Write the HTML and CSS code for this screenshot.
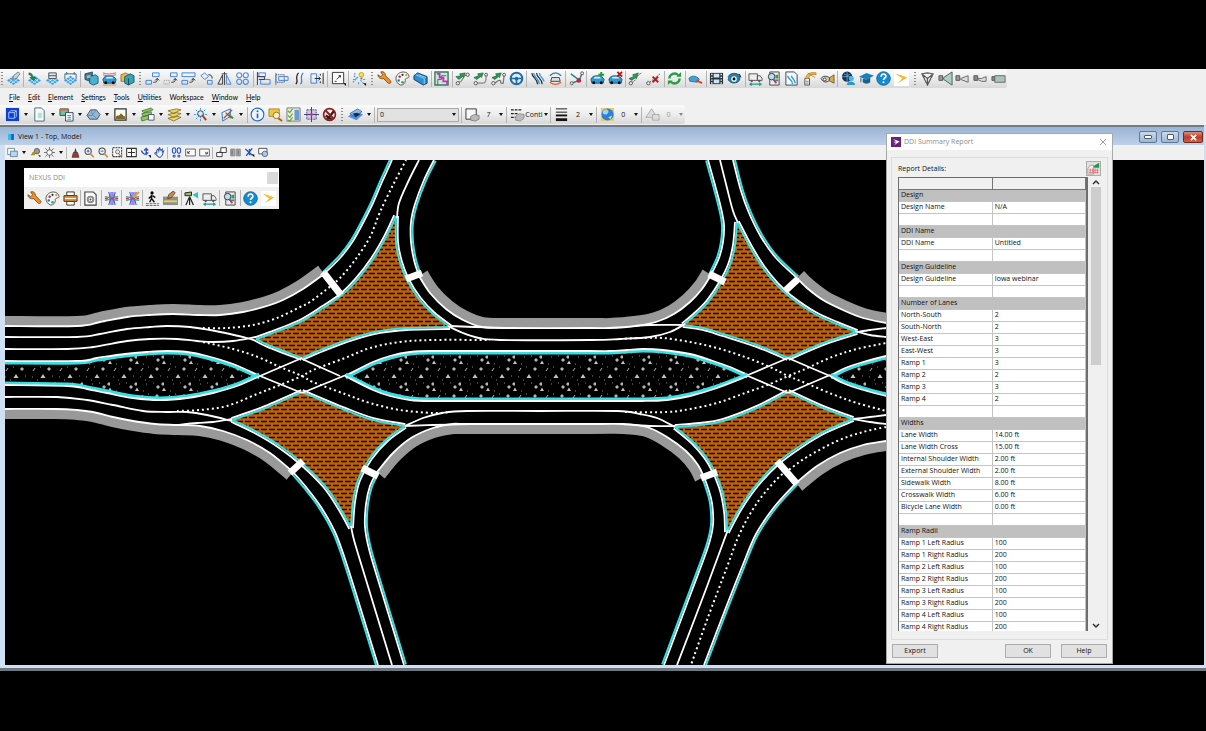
FILE: index.html
```html
<!DOCTYPE html>
<html lang="en">
<head>
    <meta charset="UTF-8">
    <meta name="viewport" content="width=device-width, initial-scale=1.0">
    <title>View 1 - Top, Model</title>
    <link rel="stylesheet" href="styles.css">
</head>
<body>
    <svg class="sprite" aria-hidden="true">
        <symbol id="tiles" viewBox="0 0 16 16"><path d="M8 5l7 5-7 5-7-5z" fill="#3aa0dd"/><path d="M3.500 8.500l7 5M5.500 6.500l7 5M12.500 8.500l-7 5M10.500 6.500l-7 5" stroke="#e8f6ff" stroke-width=".8"/></symbol>
        <symbol id="tile-pen" viewBox="0 0 16 16"><use href="#tiles"/><path d="M7 9l1-4 5-4 2 2-4 5z" fill="#c9d3d8" stroke="#56646c" stroke-width=".8"/></symbol>
        <symbol id="tile-in" viewBox="0 0 16 16"><use href="#tiles"/><path d="M2 2c4 0 4 3 5 5h3L7 10 3 7h2C4 5 4 4 2 4z" fill="#1f8a4c" stroke="#114d2b" stroke-width=".5"/></symbol>
        <symbol id="tile-db" viewBox="0 0 16 16"><use href="#tiles"/><path d="M4 2h8v6H4z" fill="#dde5e8" stroke="#47545b"/><path d="M4 5h8" stroke="#47545b"/></symbol>
        <symbol id="tile-frame" viewBox="0 0 16 16"><use href="#tiles"/><path d="M2 9V3h12v6M4 1v3M12 1v3" fill="none" stroke="#3c6680"/></symbol>
        <symbol id="blocks" viewBox="0 0 16 16"><path d="M1 3l8-2v11l-8-3z" fill="#2a7cb5" stroke="#1b4258" stroke-width=".8"/><path d="M6 6l6-2 3 2v7l-5 2-4-2z" fill="#45b0d8" stroke="#1b4258" stroke-width=".8"/><path d="M3 5l4-1v3l-4 1z" fill="#e9b23f"/></symbol>
        <symbol id="blocks-2" viewBox="0 0 16 16"><path d="M1 4l5-2 4 2v7H1z" fill="#e9b94d" stroke="#6b552a" stroke-width=".7"/><path d="M5 6l6-3 4 2v7l-6 3-4-2z" fill="#36a3b8" stroke="#17434d" stroke-width=".8"/><path d="M9 8v7" stroke="#17434d"/></symbol>
        <symbol id="car" viewBox="0 0 16 16"><path d="M1 9c1-3 3-4 7-4s6 2 7 4l-1 4H2z" fill="#2f98d6" stroke="#173f5a" stroke-width=".8"/><path d="M4 8h8l-1-2H5z" fill="#d7effc"/><circle cx="4" cy="12.500" r="1.500"/><circle cx="12" cy="12.500" r="1.500"/></symbol>
        <symbol id="car-lines" viewBox="0 0 16 16"><use href="#car"/><path d="M1 2c5 2 9 1 14 0M1 4c5 2 9 1 14 0" fill="none" stroke="#d85a6b"/><path d="M1 15h14" stroke="#d9963c"/></symbol>
        <symbol id="car-plus" viewBox="0 0 16 16"><use href="#car"/><path d="M12 1v6M9 4h6" stroke="#1b9a3f" stroke-width="2"/></symbol>
        <symbol id="car-x" viewBox="0 0 16 16"><use href="#car"/><path d="M10 1l5 5M15 1l-5 5" stroke="#b3161c" stroke-width="2"/></symbol>
        <symbol id="car-arcs" viewBox="0 0 16 16"><path d="M2 5c4-4 8-4 12 0" fill="none" stroke="#2a7fc0" stroke-width="1.500"/><path d="M4 7h8l1 4H3z" fill="#d9e2e6" stroke="#38454b"/><path d="M2 12c4 3 8 3 12 0" fill="none" stroke="#e8622a" stroke-width="1.500"/></symbol>
        <symbol id="car-brush" viewBox="0 0 16 16"><path d="M1 8c1-3 8-4 11 1l-2 3-8-1z" fill="#3aa3dc" stroke="#1c4f70" stroke-width=".7"/><path d="M9 10l6 3" stroke="#d8442f" stroke-width="2"/></symbol>
        <symbol id="copy" viewBox="0 0 16 16" fill="none" stroke="#3b7fe0"><path d="M8 2h7v4H8zM1 10h6v4H1z"/><path d="M9 12c4 0 4-1 4-4m-2 2l2-2 2 2" stroke="#222"/></symbol>
        <symbol id="move" viewBox="0 0 16 16" fill="none"><path d="M8 2h7v4H8z" stroke="#3b7fe0"/><path d="M1 10h6v4H1z" stroke="#999" stroke-dasharray="1 1"/><path d="M9 12c4 0 4-1 4-4m-2 2l2-2 2 2" stroke="#222"/></symbol>
        <symbol id="scale" viewBox="0 0 16 16" fill="none"><path d="M1 2h14v4H1zM1 10h6v4H1z" stroke="#3b7fe0"/><path d="M9 12c4 0 4-1 4-4m-2 2l2-2 2 2" stroke="#222"/></symbol>
        <symbol id="rotate" viewBox="0 0 16 16" fill="none"><path d="M2 5l4-3 4 4-4 3zM9 10h5v4H9z" stroke="#3b7fe0"/><path d="M10 4c3 0 4 1 4 4" stroke="#222"/></symbol>
        <symbol id="mirror" viewBox="0 0 16 16" fill="none"><path d="M6 4v10H1z" stroke="#333"/><path d="M10 4v10h5z" stroke="#3b7fe0"/><path d="M8 1v14M5 3h6" stroke="#444"/></symbol>
        <symbol id="array" viewBox="0 0 16 16" fill="none" stroke="#4a8ee6" stroke-width="1.200"><circle cx="4.500" cy="4.500" r="2.700"/><circle cx="11.500" cy="4.500" r="2.700"/><circle cx="4.500" cy="11.500" r="2.700"/><circle cx="11.500" cy="11.500" r="2.700"/></symbol>
        <symbol id="align" viewBox="0 0 16 16" fill="none"><path d="M3 2h7v4H3zM5 9h10v5H5z" stroke="#3b7fe0"/><path d="M1.500 1v14M1 6h8v3H3" stroke="#334"/></symbol>
        <symbol id="stretch" viewBox="0 0 16 16" fill="none"><path d="M2 4h9v8H2z" stroke="#222" stroke-dasharray="1 1"/><path d="M5 6h10v4H5z" stroke="#3b7fe0"/><path d="M2 2v13" stroke="#3b7fe0"/></symbol>
        <symbol id="curves" viewBox="0 0 16 16" fill="none" stroke-width="1.300"><path d="M4 14c4-3-2-7 3-12" stroke="#222"/><path d="M9 14c4-3-2-7 3-12" stroke="#3b7fe0"/></symbol>
        <symbol id="trim" viewBox="0 0 16 16" fill="none"><path d="M1 3h6v10H1z" stroke="#3b7fe0"/><path d="M5 8h6M9 6l2 2-2 2M14 2v12M11 3v2M11 11v2" stroke="#222"/></symbol>
        <symbol id="fence" viewBox="0 0 16 16"><path d="M1.500 1.500h12v12h-12z" fill="#fff" stroke="#333"/><path d="M6 9l4-4m-2 0h2v2M4 11h2" fill="none" stroke="#222"/><path d="M13 13h3v3z"/></symbol>
        <symbol id="bulb" viewBox="0 0 16 16"><path d="M1 12l6-6M2 5l3 3M9 10l4 4M3 2v2M1 9h2M7 12v3M12 9h3" stroke="#4a9be8" stroke-width="1.200" stroke-dasharray="2 1"/><circle cx="10" cy="4" r="2.500" fill="#f6e04b" stroke="#a78d20" stroke-width=".7"/><path d="M9 7h2v2H9z" fill="#777"/><path d="M12 13h3v3z"/></symbol>
        <symbol id="wrench" viewBox="0 0 16 16"><path d="M1 4l3 2 2-2-2-3c3-1 5 1 5 4l5 5c2 2 0 4-2 3L7 8C4 9 1 7 1 4z" fill="#ee9226" stroke="#6f4210" stroke-width=".9"/></symbol>
        <symbol id="palette" viewBox="0 0 16 16"><path d="M9 1c4 0 6 3 6 5s-5 1-4 4c0 3-2 5-5 5-3-1-5-4-5-7 0-4 4-7 8-7z" fill="#f4f4f4" stroke="#555"/><circle cx="8" cy="4" r="1.200" fill="#333"/><circle cx="5" cy="6" r="1.300" fill="#9a2f35"/><circle cx="4" cy="10" r="1.300" fill="#2570b8"/><circle cx="8" cy="12" r="1.300" fill="#2f9e44"/><circle cx="12" cy="4.500" r="1.200" fill="#d8a32f"/></symbol>
        <symbol id="barrel" viewBox="0 0 16 16"><path d="M1 5l4-3 10 4v7l-4 2L1 9z" fill="#2d8fd1" stroke="#123c5c"/><path d="M3 4l9 4v6M6 4l8 3" fill="none" stroke="#8fd0f2"/></symbol>
        <symbol id="stair" viewBox="0 0 16 16"><path d="M1 1h14v14H1z" fill="#cfe7da" stroke="#3d7a5c" stroke-width="1.500"/><path d="M3 3h3v4h4v4h4v3" fill="none" stroke="#d628c8" stroke-width="2"/><path d="M4 15V9h4V5h5" fill="none" stroke="#41669b"/></symbol>
        <symbol id="path-a" viewBox="0 0 16 16"><path d="M4 12c5 0 4-8 9-8" fill="none" stroke="#888" stroke-width="1.300"/><circle cx="3" cy="13" r="1.800" fill="#eee" stroke="#555"/><circle cx="13.500" cy="4" r="1.800" fill="#eee" stroke="#555"/><path d="M1 6l5-1-1-2 6-1-2 5-1-1-4 3z" fill="#2c9a57" stroke="#12552c" stroke-width=".6"/></symbol>
        <symbol id="path-b" viewBox="0 0 16 16"><path d="M3 13h7c4 0 4-3 4-9" fill="none" stroke="#888" stroke-width="1.300"/><circle cx="3" cy="13" r="1.800" fill="#eee" stroke="#555"/><circle cx="14" cy="4" r="1.600" fill="#eee" stroke="#555"/><path d="M1 7l5-2-1-2 6-1-2 5-1-1-4 3z" fill="#2c9a57" stroke="#12552c" stroke-width=".6"/></symbol>
        <symbol id="path-c" viewBox="0 0 16 16"><path d="M3 13c3 0 3-3 6-3s-1 4 4 3l1-8" fill="none" stroke="#777" stroke-width="1.300"/><circle cx="2.500" cy="13" r="1.800" fill="#eee" stroke="#555"/><circle cx="14" cy="4" r="1.600" fill="#eee" stroke="#555"/><path d="M1 7l5-2-1-2 6-1-2 5-1-1-4 3z" fill="#2c9a57" stroke="#12552c" stroke-width=".6"/></symbol>
        <symbol id="path-dash" viewBox="0 0 16 16"><path d="M4 12c5 0 4-8 11-10" fill="none" stroke="#555" stroke-dasharray="2 1"/><circle cx="3" cy="13" r="1.800" fill="#eee" stroke="#555"/><path d="M1 8l5-2-1-2 6-2-2 6-1-1-4 3z" fill="#2c9a57" stroke="#12552c" stroke-width=".6"/></symbol>
        <symbol id="path-x" viewBox="0 0 16 16"><path d="M4 12l11-9" fill="none" stroke="#666" stroke-dasharray="2 1"/><circle cx="2.500" cy="13" r="1.800" fill="#eee" stroke="#555"/><path d="M7 6l6 6M13 6l-6 6" stroke="#c4151d" stroke-width="2"/></symbol>
        <symbol id="wheel" viewBox="0 0 16 16"><circle cx="8" cy="8" r="6.200" fill="#d9ecf6" stroke="#1f6da6" stroke-width="2.200"/><circle cx="8" cy="8" r="2" fill="#1f6da6"/><path d="M2 8h12M8 8v6" stroke="#1f6da6" stroke-width="1.800"/></symbol>
        <symbol id="lanes" viewBox="0 0 16 16" fill="none"><path d="M2 2c0 5 6 6 6 12M7 2c0 5 6 6 6 12" stroke="#222" stroke-width="1.200"/><path d="M4 2c0 5 6 6 6 12M10 2c0 4 4 5 5 9" stroke="#3a9be0" stroke-width="1.500"/></symbol>
        <symbol id="nodes" viewBox="0 0 16 16"><path d="M3 13l8-3 3-8M2 3l8 6" fill="none" stroke="#1c7f8a" stroke-width="1.500"/><circle cx="3" cy="13" r="1.600" fill="#eee" stroke="#555"/><circle cx="14" cy="2.500" r="1.600" fill="#eee" stroke="#555"/><circle cx="10.500" cy="10" r="2.500" fill="#c7223a"/></symbol>
        <symbol id="refresh" viewBox="0 0 16 16" fill="none" stroke="#2a9a45" stroke-width="2.500"><path d="M2.500 8a5.500 5.500 0 0 1 9.500-3.500M13.500 8A5.500 5.500 0 0 1 4 11.500"/><path d="M10 6h5V1zM6 10H1v5z" fill="#2a9a45" stroke="none"/></symbol>
        <symbol id="film" viewBox="0 0 16 16"><path d="M1 2h14v12H1z" fill="#26323c"/><path d="M5 3h6v4H5zM5 9h6v4H5z" fill="#cde2f2"/><path d="M3 3v11M13 3v11" stroke="#f2f2f2" stroke-width="1.500" stroke-dasharray="1.500 1.500"/></symbol>
        <symbol id="eye" viewBox="0 0 16 16"><path d="M1 6c3-4 8-5 13-1-2 0 2 4-3 7-5 2-8 0-10-3" fill="#2480ad" stroke="#123a50" stroke-width=".8"/><circle cx="7.500" cy="8.500" r="3" fill="#e7f6fb"/><circle cx="7.500" cy="8.500" r="1.500"/><path d="M13 3l2 4" stroke="#222"/></symbol>
        <symbol id="truck" viewBox="0 0 16 16"><path d="M1 3h9v7H1zM10 5h3l2 3v2h-5z" fill="#eee" stroke="#555"/><circle cx="4" cy="10.500" r="1.300" fill="#555"/><circle cx="12" cy="10.500" r="1.300" fill="#555"/><path d="M2 14h12M4 12.500L2 14l2 1.500M12 12.500l2 1.500-2 1.500" fill="none" stroke="#1f9e94" stroke-width="1.200"/></symbol>
        <symbol id="report" viewBox="0 0 16 16"><path d="M4 1h10v14H4z" fill="#eee" stroke="#444"/><circle cx="6" cy="6" r="3.500" fill="#b9def0" stroke="#333"/><path d="M8 9l3 4" stroke="#c33a2e" stroke-width="2"/><path d="M10 4h3v4h-3z" fill="#35a34e"/><path d="M9 9h4v2H9z" fill="#4776c5"/></symbol>
        <symbol id="page-curve" viewBox="0 0 16 16"><path d="M2 1h9l3 3v11H2z" fill="#f4fbff" stroke="#345"/><path d="M4 5c0 4 5 3 5 9M8 5c0 3 4 4 4 8" fill="none" stroke="#2b8fd8" stroke-width="1.400"/></symbol>
        <symbol id="pole" viewBox="0 0 16 16"><path d="M3 8h5v7H3z" fill="#f3f3f3" stroke="#555"/><path d="M4 8C4 3 9 1 15 2v2C10 3 8 4 7 8M6 2l8 5" fill="#f1b93f" stroke="#b4791c" stroke-width=".8"/><path d="M4 11h3M4 13h3" stroke="#555" stroke-width=".7"/></symbol>
        <symbol id="horn" viewBox="0 0 16 16"><path d="M9 8l6-4v9l-6-3z" fill="#e5a63a" stroke="#4c4c4c" stroke-width=".8"/><path d="M1 8c2-3 6-3 9-1v3c-3 3-7 2-9-2z" fill="#ccc" stroke="#444"/><circle cx="5" cy="9" r="1.500" fill="#fff" stroke="#444"/></symbol>
        <symbol id="globe-user" viewBox="0 0 16 16"><circle cx="6.500" cy="6" r="5.500" fill="#16334f"/><path d="M1 6h11M6.500 1v10M3 3c3 2 5 2 7 0" fill="none" stroke="#6fb3dd" stroke-width=".8"/><circle cx="11" cy="8" r="2.700" fill="#4fb4e6"/><path d="M6 15c0-5 9-5 9 0z" fill="#2f95d2"/></symbol>
        <symbol id="cap" viewBox="0 0 16 16"><path d="M0 6l8-4 8 3-8 4z" fill="#1a81bd"/><path d="M4 8v4c2 2 6 2 8 0V7l-4 2z" fill="#17618f"/><path d="M2 7v5" stroke="#17618f"/></symbol>
        <symbol id="help" viewBox="0 0 16 16"><circle cx="8" cy="8" r="7.300" fill="#128bd0" stroke="#0c5c8f" stroke-width=".8"/><path d="M5.500 6c0-4 5.500-3.500 5 0-.3 1.500-2.500 1.500-2.500 3.500" fill="none" stroke="#fff" stroke-width="1.800"/><circle cx="8" cy="12" r="1.100" fill="#fff"/></symbol>
        <symbol id="chevron" viewBox="0 0 16 16"><path d="M0 0h16v16H0z" fill="#fff"/><path d="M2 3l12 4-10 6 5-5z" fill="#f7a823"/><path d="M2 3l12 4-5 1z" fill="#ffc020"/></symbol>
        <symbol id="prism" viewBox="0 0 16 16" fill="none" stroke="#555" stroke-width="1.200"><path d="M2 3l6-1 6 1-6 12zM8 15V8M2 3l6 5 6-5"/></symbol>
        <symbol id="cone" viewBox="0 0 16 16"><path d="M1 5h4v5H1z" fill="#999" stroke="#555"/><path d="M6 7l9-6v14l-9-6z" fill="#a9d3c6" stroke="#555"/></symbol>
        <symbol id="cone-s" viewBox="0 0 16 16"><path d="M1 5h4v5H1z" fill="#999" stroke="#555"/><path d="M6 8l8-3v7l-8-3z" fill="#ddd" stroke="#666"/></symbol>
        <symbol id="cone-l" viewBox="0 0 16 16"><path d="M1 5h4v5H1z" fill="#888" stroke="#555"/><path d="M5 8h4l5-2v5H9L5 9z" fill="#ddd" stroke="#666"/></symbol>
        <symbol id="cone-box" viewBox="0 0 16 16"><path d="M1 6h3v4H1z" fill="#888" stroke="#555"/><path d="M4 5h11v7H4z" fill="#a8c5bc" stroke="#666"/></symbol>

        <symbol id="cube" viewBox="0 0 16 16"><path d="M1 1h14v14H1z" fill="#0f3fd0"/><path d="M4 6h6v6H4zM4 6l2-2h6v6l-2 2M10 6l2-2" fill="none" stroke="#a9c6ff"/></symbol>
        <symbol id="sheet" viewBox="0 0 16 16"><path d="M3 1h7l3 3v11H3z" fill="#f9ffff" stroke="#467"/><path d="M6 6h5v6H6z" fill="#b8e3d7"/></symbol>
        <symbol id="model" viewBox="0 0 16 16"><path d="M1 2h9v7H1z" fill="#65c7a2" stroke="#345"/><path d="M1 2h9v2H1z" fill="#e36b3b"/><path d="M7 6h8v9H7z" fill="#fff" stroke="#345"/><path d="M9 9h4M9 11h4M9 13h4" stroke="#3a84c9"/></symbol>
        <symbol id="gem" viewBox="0 0 16 16"><path d="M1 9l4-6 6 0 4 5-3 5H4z" fill="#91b8d8" stroke="#555"/><path d="M5 3l2 5 4-5M7 8l5 5M1 9h6" fill="none" stroke="#5f7fae" stroke-width=".8"/></symbol>
        <symbol id="image" viewBox="0 0 16 16"><path d="M2 2h12v12H2z" fill="#fbfbf0" stroke="#333" stroke-width="1.300"/><path d="M3 12c0-5 4-1 5-5 2-1 2 3 5 3v3H3z" fill="#7c6a2b"/></symbol>
        <symbol id="books" viewBox="0 0 16 16"><path d="M2 4l10-3 2 2-10 3zM2 7l10-2v3L3 10zM1 11l11-3v4L2 15z" fill="#8ecb62" stroke="#3d6a2d" stroke-width=".8"/><path d="M9 8h6v6H9z" fill="#fff" stroke="#456"/></symbol>
        <symbol id="layers" viewBox="0 0 16 16" fill="#eed45e" stroke="#75651e" stroke-width=".8"><path d="M1 12l9-2 5 1-8 4zM1 8l9-2 5 1-8 4zM1 4l9-2 5 1-8 4z"/></symbol>
        <symbol id="snap" viewBox="0 0 16 16"><path d="M8 1v14M1 8h14M3 3l10 10M13 3L3 13" stroke="#3f8fe8" stroke-dasharray="2 1"/><circle cx="8" cy="7" r="3" fill="#d9ecff" stroke="#245"/><path d="M10 9l4 5" stroke="#a5451f" stroke-width="2"/></symbol>
        <symbol id="pen-sheet" viewBox="0 0 16 16"><path d="M2 6l9-4v8l-8 5z" fill="#e6f4ef" stroke="#2772c8"/><path d="M4 12l9-9M6 6l6 6" stroke="#c63c36" stroke-width="1.300"/><path d="M9 8l5 4" stroke="#2b9a3c" stroke-width="2"/></symbol>
        <symbol id="info" viewBox="0 0 16 16"><circle cx="8" cy="8" r="6.800" fill="#eff6ff" stroke="#2968c8" stroke-width="1.200"/><path d="M8 7v5" fill="none" stroke="#2968c8" stroke-width="1.800"/><circle cx="8" cy="4.500" r="1.100" fill="#2968c8"/></symbol>
        <symbol id="find" viewBox="0 0 16 16"><path d="M1 2h11v8H1z" fill="#f2c53c" stroke="#8a6a15" stroke-width=".7"/><circle cx="9" cy="9" r="3.500" fill="#f5eec2" stroke="#957520"/><path d="M11 12l4 3" stroke="#b05822" stroke-width="2"/></symbol>
        <symbol id="accu" viewBox="0 0 16 16"><path d="M1 1h14v14H1z" fill="#e8efe2" stroke="#777"/><path d="M2 4l2 2 3-4M2 9l2 2 3-4M2 14l2 1 3-4" fill="none" stroke="#6aa52b" stroke-width="1.300"/><path d="M9 3h5v11H9z" fill="#6a9cd2"/></symbol>
        <symbol id="target" viewBox="0 0 16 16"><path d="M3 3h10v10H3z" fill="#cfc6e2" stroke="#55467a" stroke-dasharray="2 1"/><path d="M8 0v16M0 8h16" stroke="#3b3b77"/><circle cx="8" cy="8" r="1.500" fill="#c2337a"/></symbol>
        <symbol id="no" viewBox="0 0 16 16"><path d="M5 14l8-10M4 9l7 5" stroke="#222" stroke-width="2.500"/><circle cx="8" cy="8" r="6.300" fill="none" stroke="#8f1c1c" stroke-width="1.800"/><path d="M3.500 3.500l9 9" stroke="#8f1c1c" stroke-width="2"/></symbol>
        <symbol id="stack" viewBox="0 0 16 16"><path d="M0 10l8-6 8 4-7 6z" fill="#4a93e0"/><path d="M2 7l8-5 5 3-8 5z" fill="#8bbcf0" stroke="#234e8d" stroke-width=".7"/><path d="M5 7l5-1 3 2-5 3z" fill="#1b2c4b"/></symbol>
        <symbol id="level" viewBox="0 0 16 16"><path d="M1 2h11v11H1z" fill="#f6f6f6" stroke="#333"/><path d="M6 10l4-2 5 1v4l-4 2-5-1z" fill="#bbb" stroke="#666" stroke-width=".7"/></symbol>
        <symbol id="style" viewBox="0 0 16 16"><path d="M1 3h12M1 7h7M1 11h5" stroke="#222" stroke-width="1.200" stroke-dasharray="3 1"/><path d="M6 10l4-3 5 1v4l-4 3-5-1z" fill="#bbb" stroke="#777" stroke-width=".7"/></symbol>
        <symbol id="weight" viewBox="0 0 16 16"><path d="M2 2h12M2 5.500h12" stroke="#111"/><path d="M2 9h12" stroke="#111" stroke-width="2"/><path d="M2 13.500h12" stroke="#111" stroke-width="3"/></symbol>
        <symbol id="ball" viewBox="0 0 16 16"><path d="M1 1h14v14H1z" fill="#e8cc68"/><circle cx="8" cy="8" r="6.500" fill="#2f7fd6"/><path d="M3 5c2-4 6-3 6 0s-4 4-6 2z" fill="#9fd4f5"/><path d="M9 11l4-2-2 4z" fill="#c7e9fa"/></symbol>
        <symbol id="tri" viewBox="0 0 16 16" fill="#ddd" stroke="#aaa"><path d="M7 2l6 9H1z"/><path d="M8 8h7v6H8z"/></symbol>

        <symbol id="v-attr" viewBox="0 0 16 16"><path d="M1 2h10v9H1z" fill="#fff" stroke="#468"/><path d="M5 6h10v8H5z" fill="#b7d7f0" stroke="#468"/></symbol>
        <symbol id="v-key" viewBox="0 0 16 16"><circle cx="10" cy="6" r="4" fill="#999" stroke="#444"/><path d="M2 12l5-5M3 9h3v3" fill="none" stroke="#a49421" stroke-width="2.500"/><path d="M12 12h3v3z"/></symbol>
        <symbol id="v-sun" viewBox="0 0 16 16"><path d="M8 0v16M0 8h16M2 2l12 12M14 2L2 14" stroke="#666" stroke-width="1.300"/><circle cx="8" cy="8" r="4" fill="#fff" stroke="#555" stroke-width="1.300"/></symbol>
        <symbol id="v-brush" viewBox="0 0 16 16"><path d="M8 1l2 7H6z" fill="#345"/><path d="M5 8h6l2 7H3z" fill="#a3392e" stroke="#333"/></symbol>
        <symbol id="v-in" viewBox="0 0 16 16"><circle cx="6" cy="6" r="4.500" fill="#e6f4ff" stroke="#444" stroke-width="1.500"/><path d="M6 4v4M4 6h4" stroke="#2355a8" stroke-width="1.300"/><path d="M9 9l5 6" stroke="#cf8b4b" stroke-width="2.500"/></symbol>
        <symbol id="v-out" viewBox="0 0 16 16"><circle cx="6" cy="6" r="4.500" fill="#e6f4ff" stroke="#444" stroke-width="1.500"/><path d="M4 6h4" stroke="#2355a8" stroke-width="1.300"/><path d="M9 9l5 6" stroke="#cf8b4b" stroke-width="2.500"/></symbol>
        <symbol id="v-win" viewBox="0 0 16 16"><path d="M1 1h13v13H1z" fill="#fff" stroke="#333" stroke-width="1.500" stroke-dasharray="3 1"/><circle cx="8" cy="7" r="3" fill="#d9eefc" stroke="#444"/><path d="M10 10l4 5" stroke="#b9784a" stroke-width="2"/></symbol>
        <symbol id="v-fit" viewBox="0 0 16 16"><path d="M1 2h14v12H1z" fill="#fff" stroke="#333" stroke-width="1.500"/><path d="M8 3v10M3 8h10" stroke="#333" stroke-width="1.500"/></symbol>
        <symbol id="v-rot" viewBox="0 0 16 16" fill="none" stroke="#2a55c0" stroke-width="2"><path d="M2 5c2 6 6 7 10 3M9 2v10M6 5l3-3 3 3"/><path d="M12 12h4v4z" fill="#000" stroke="none"/></symbol>
        <symbol id="v-hand" viewBox="0 0 16 16"><path d="M4 9V5l2-2 1 3 1-5 2 4 2-2v4l2-1-2 6-3 3H7L1 9l2-1z" fill="#f4f6ff" stroke="#3558b5" stroke-width="1.500"/></symbol>
        <symbol id="v-walk" viewBox="0 0 16 16" fill="#e4edff" stroke="#2a55c0" stroke-width="1.500"><ellipse cx="4.500" cy="5" rx="2.500" ry="4"/><circle cx="4.500" cy="13" r="1.500"/><ellipse cx="11.500" cy="5" rx="2.500" ry="4"/><circle cx="11.500" cy="13" r="1.500"/></symbol>
        <symbol id="v-prev" viewBox="0 0 16 16"><path d="M1 3h14v10H1z" fill="#fff" stroke="#555" stroke-width="1.300"/><path d="M4 9l3-3M4 6v3h3" fill="none" stroke="#333" stroke-width="1.300"/></symbol>
        <symbol id="v-next" viewBox="0 0 16 16"><path d="M1 3h14v10H1z" fill="#fff" stroke="#555" stroke-width="1.300"/><path d="M12 10l-3-3M12 7v3H9" fill="none" stroke="#333" stroke-width="1.300"/></symbol>
        <symbol id="v-copy" viewBox="0 0 16 16"><path d="M7 1h8v7H7zM1 8h8v6H1z" fill="#fff" stroke="#333" stroke-width="1.300"/><path d="M6 6L4 8" stroke="#333"/></symbol>
        <symbol id="v-seq" viewBox="0 0 16 16"><path d="M1 3h6v10H1zM9 3h6v10H9z" fill="#aaa" stroke="#777"/><path d="M3 5v6M12 5v6" stroke="#444"/></symbol>
        <symbol id="v-clip" viewBox="0 0 16 16"><path d="M2 3l10 9M12 2L3 13M8 3v9" stroke="#2456b8" stroke-width="2"/><path d="M11 11h4v4z"/></symbol>
        <symbol id="v-mask" viewBox="0 0 16 16"><path d="M1 2h12v8H1z" fill="#fff" stroke="#445" stroke-width="1.300"/><circle cx="10" cy="10" r="4" fill="#a8ccf0" stroke="#345"/></symbol>

        <symbol id="printer" viewBox="0 0 16 16"><path d="M4 1h8v4H4zM4 11h8v4H4z" fill="#fff" stroke="#333"/><path d="M1 5h14v6H1z" fill="#f0922c" stroke="#333"/><path d="M2 8h12" stroke="#fff"/></symbol>
        <symbol id="page-gear" viewBox="0 0 16 16"><path d="M2 1h9l3 3v11H2z" fill="#fff" stroke="#444" stroke-width="1.200"/><circle cx="8" cy="9" r="3" fill="none" stroke="#888" stroke-width="2"/><circle cx="8" cy="9" r="1" fill="#444"/></symbol>
        <symbol id="ddi" viewBox="0 0 16 16" fill="none"><path d="M5 1c2 5 2 9 0 14M7.500 1v14M9.500 1v14M12 1c-2 5-2 9 0 14" stroke="#4a4ad8" stroke-width="1.100"/><path d="M1 6c5 0 8 4 14 4M1 10c5 0 8-4 14-4" stroke="#35a58a" stroke-width="1.200"/><path d="M1 8h3M12 8h3M7 8h3" stroke="#d03540" stroke-width="1.500"/></symbol>
        <symbol id="ddi-edit" viewBox="0 0 16 16"><use href="#ddi"/><path d="M9 7l6-6" stroke="#f0a02c" stroke-width="2.200"/></symbol>
        <symbol id="walker" viewBox="0 0 16 16"><circle cx="7.500" cy="2" r="1.700"/><path d="M7 4v4l3 4M7 8l-2 4M7 5L4 8M8 5l3 2" fill="none" stroke="#111" stroke-width="1.500"/><path d="M1 13.500h14M1 15.500h14" stroke="#444" stroke-width=".8" stroke-dasharray="3 1"/></symbol>
        <symbol id="marking" viewBox="0 0 16 16"><path d="M0 6h16v9H0z" fill="#8f8f8f"/><path d="M1 11h14" stroke="#f1d34b" stroke-width="2"/><path d="M5 8l1-4 5-4 2 2-4 5z" fill="#d48a3b" stroke="#333" stroke-width=".8"/></symbol>
        <symbol id="survey" viewBox="0 0 16 16"><path d="M1 2l7-1v4H1z" fill="#9bb85c" stroke="#222"/><path d="M6 6L2 15M6 6v9M6 6l4 9" stroke="#222" stroke-width="1.300"/><path d="M9 4l6-3v7z" fill="#2cc2d0"/></symbol>
        <symbol id="chart" viewBox="0 0 16 16"><path d="M1 8l3-4h4v11H1z" fill="#f7ebeb" stroke="#888" stroke-width=".8"/><path d="M4 14V8M7 14V8M10 14V8M13 14V8M2 10h12M2 13h12" stroke="#de6a6a" stroke-width=".9"/><path d="M8 5l7-4v6H9z" fill="#1f9c45"/></symbol>
        <symbol id="nexus" viewBox="0 0 16 16"><path d="M0 0h16v16H0z" fill="#69207a"/><path d="M3 3l11 4-9 6 3-4-5-1 5-1z" fill="#fff"/></symbol>
    </svg>

    <main class="app">
        <div class="bar">
            <div class="tools terrain">
                <i class="grip"></i>
                <button title="Create Terrain"><svg><use href="#tile-pen"/></svg></button><i class="sep"></i>
                <button title="Import Terrain"><svg><use href="#tile-in"/></svg></button>
                <button title="Terrain Data"><svg><use href="#tile-db"/></svg></button>
                <button title="Terrain Extents"><svg><use href="#tile-frame"/></svg></button><i class="sep"></i>
                <button title="Solid Model"><svg><use href="#blocks"/></svg></button>
                <button title="Vehicle Surface"><svg><use href="#car-lines"/></svg></button>
                <button title="Solid Blocks"><svg><use href="#blocks-2"/></svg></button>
            </div>
            <div class="tools edit">
                <i class="grip"></i>
                <button title="Copy"><svg><use href="#copy"/></svg></button>
                <button title="Move"><svg><use href="#move"/></svg></button>
                <button title="Scale"><svg><use href="#scale"/></svg></button>
                <button title="Rotate"><svg><use href="#rotate"/></svg></button>
                <button title="Mirror"><svg><use href="#mirror"/></svg></button>
                <button title="Array"><svg><use href="#array"/></svg></button><i class="sep"></i>
                <button title="Align"><svg><use href="#align"/></svg></button>
                <button title="Stretch"><svg><use href="#stretch"/></svg></button>
                <button title="Move Parallel"><svg><use href="#curves"/></svg></button>
                <button title="Trim"><svg><use href="#trim"/></svg></button><i class="sep"></i>
                <button title="Fence"><svg><use href="#fence"/></svg></button><i class="sep"></i>
                <button title="Highlight"><svg><use href="#bulb"/></svg></button>
            </div>
            <div class="tools vehicle">
                <i class="grip"></i>
                <button title="Settings"><svg><use href="#wrench"/></svg></button>
                <button title="Colors"><svg><use href="#palette"/></svg></button>
                <button title="Vehicle Library"><svg><use href="#barrel"/></svg></button><i class="sep"></i>
                <button title="Turn Profile"><svg><use href="#stair"/></svg></button><i class="sep"></i>
                <button title="Generate Arc Path"><svg><use href="#path-a"/></svg></button>
                <button title="Generate Corner Path"><svg><use href="#path-b"/></svg></button>
                <button title="Generate Spline Path"><svg><use href="#path-c"/></svg></button>
                <button title="Steer"><svg><use href="#wheel"/></svg></button><i class="sep"></i>
                <button title="Adaptive Lanes"><svg><use href="#lanes"/></svg></button>
                <button title="Swept Path"><svg><use href="#car-arcs"/></svg></button><i class="sep"></i>
                <button title="Edit Nodes"><svg><use href="#nodes"/></svg></button><i class="sep"></i>
                <button title="Add Vehicle"><svg><use href="#car-plus"/></svg></button>
                <button title="Remove Vehicle"><svg><use href="#car-x"/></svg></button><i class="sep"></i>
                <button title="Extend Path"><svg><use href="#path-dash"/></svg></button>
                <button title="Delete Path"><svg><use href="#path-x"/></svg></button><i class="sep"></i>
                <button title="Refresh"><svg><use href="#refresh"/></svg></button><i class="sep"></i>
                <button title="Paint Vehicle"><svg><use href="#car-brush"/></svg></button><i class="sep"></i>
                <button title="Animation"><svg><use href="#film"/></svg></button>
                <button title="Driver View"><svg><use href="#eye"/></svg></button><i class="sep"></i>
                <button title="Dimensions"><svg><use href="#truck"/></svg></button>
                <button title="Report"><svg><use href="#report"/></svg></button>
                <button title="Lane Template"><svg><use href="#page-curve"/></svg></button>
                <button title="Clearance"><svg><use href="#pole"/></svg></button>
                <button title="Conflict"><svg><use href="#horn"/></svg></button><i class="sep"></i>
                <button title="Community"><svg><use href="#globe-user"/></svg></button>
                <button title="Learning"><svg><use href="#cap"/></svg></button>
                <button title="Help"><svg><use href="#help"/></svg></button>
                <button title="About"><svg><use href="#chevron"/></svg></button>
            </div>
            <div class="tools camera">
                <i class="grip"></i>
                <button title="Camera"><svg><use href="#prism"/></svg></button>
                <button title="Wide Lens"><svg><use href="#cone"/></svg></button>
                <button title="Normal Lens"><svg><use href="#cone-s"/></svg></button>
                <button title="Telephoto Lens"><svg><use href="#cone-l"/></svg></button>
                <button title="Parallel Lens"><svg><use href="#cone-box"/></svg></button>
            </div>
        </div>

        <nav class="menu">
            <a href="#file"><u>F</u>ile</a>
            <a href="#edit"><u>E</u>dit</a>
            <a href="#element"><u>E</u>lement</a>
            <a href="#settings"><u>S</u>ettings</a>
            <a href="#tools"><u>T</u>ools</a>
            <a href="#utilities"><u>U</u>tilities</a>
            <a href="#workspace">Wor<u>k</u>space</a>
            <a href="#window"><u>W</u>indow</a>
            <a href="#help-menu"><u>H</u>elp</a>
        </nav>

        <div class="bar">
            <div class="tools primary">
                <button title="Models"><svg><use href="#cube"/></svg></button><button class="drop" title="Models list"></button>
                <button title="References"><svg><use href="#sheet"/></svg></button><button class="drop" title="References list"></button>
                <button title="Raster Manager"><svg><use href="#model"/></svg></button><button class="drop" title="Raster list"></button>
                <button title="Point Clouds"><svg><use href="#gem"/></svg></button><button class="drop" title="Point cloud list"></button>
                <button title="Images"><svg><use href="#image"/></svg></button><button class="drop" title="Images list"></button>
                <button title="Level Manager"><svg><use href="#books"/></svg></button><button class="drop" title="Level manager list"></button>
                <button title="Level Display"><svg><use href="#layers"/></svg></button><button class="drop" title="Level display list"></button>
                <button title="Snap"><svg><use href="#snap"/></svg></button><button class="drop" title="Snap list"></button>
                <button title="Markup"><svg><use href="#pen-sheet"/></svg></button><button class="drop" title="Markup list"></button><i class="sep"></i>
                <button title="Information"><svg><use href="#info"/></svg></button>
                <button title="Search"><svg><use href="#find"/></svg></button>
                <button title="Toggle AccuDraw"><svg><use href="#accu"/></svg></button>
                <button title="Locks"><svg><use href="#target"/></svg></button>
                <button title="Cancel"><svg><use href="#no"/></svg></button>
            </div>
            <div class="tools attributes">
                <i class="grip"></i>
                <button title="Element Template"><svg><use href="#stack"/></svg></button><button class="drop" title="Template list"></button><i class="sep"></i>
                <label class="combo template"><select aria-label="Active level"><option>0</option></select></label><i class="sep"></i>
                <label class="combo"><svg><use href="#level"/></svg><select aria-label="Color"><option>7</option></select></label><i class="sep"></i>
                <label class="combo linestyle"><svg><use href="#style"/></svg><select aria-label="Line style"><option>Conti</option></select></label><i class="sep"></i>
                <label class="combo"><svg><use href="#weight"/></svg><select aria-label="Line weight"><option>2</option></select></label><i class="sep"></i>
                <label class="combo"><svg><use href="#ball"/></svg><select aria-label="Transparency"><option>0</option></select></label><i class="sep"></i>
                <label class="combo off"><svg><use href="#tri"/></svg><select aria-label="Priority" disabled><option>0</option></select></label>
            </div>
        </div>

        <section class="view">
            <header class="view-title">
                <i class="view-icon"></i>
                <h1>View 1 - Top, Model</h1>
                <button class="win" title="Minimize"><i class="min"></i></button>
                <button class="win" title="Restore"><i class="max"></i></button>
                <button class="win red" title="Close"><svg viewBox="0 0 8 8"><path d="M1 1l6 6M7 1L1 7" stroke="#fff" stroke-width="2"/></svg></button>
            </header>
            <div class="view-tools">
                <button title="View Attributes"><svg><use href="#v-attr"/></svg></button><button class="drop" title="View attributes list"></button>
                <button title="Display Style"><svg><use href="#v-key"/></svg></button>
                <button title="Brightness"><svg><use href="#v-sun"/></svg></button><button class="drop" title="Brightness list"></button><i class="sep"></i>
                <button title="Update View"><svg><use href="#v-brush"/></svg></button>
                <button title="Zoom In"><svg><use href="#v-in"/></svg></button>
                <button title="Zoom Out"><svg><use href="#v-out"/></svg></button>
                <button title="Window Area"><svg><use href="#v-win"/></svg></button>
                <button title="Fit View"><svg><use href="#v-fit"/></svg></button>
                <button title="Rotate View"><svg><use href="#v-rot"/></svg></button>
                <button title="Pan View"><svg><use href="#v-hand"/></svg></button><i class="sep"></i>
                <button title="Walk"><svg><use href="#v-walk"/></svg></button>
                <button title="View Previous"><svg><use href="#v-prev"/></svg></button>
                <button title="View Next"><svg><use href="#v-next"/></svg></button><i class="sep"></i>
                <button title="Copy View"><svg><use href="#v-copy"/></svg></button>
                <button title="View Sequence"><svg><use href="#v-seq"/></svg></button>
                <button title="Clip Volume"><svg><use href="#v-clip"/></svg></button>
                <button title="Clip Mask"><svg><use href="#v-mask"/></svg></button>
            </div>

            <div class="canvas">
                <svg id="drawing" viewBox="5 160 1199 505" preserveAspectRatio="xMinYMin slice" role="img" aria-label="Diverging diamond interchange">
                    <defs>
                        <pattern id="brick" width="8" height="8" patternUnits="userSpaceOnUse">
                            <path d="M0 0h8v8H0z" fill="#bd620c"/>
                            <path d="M1 1.500h6M0 5.500h3M5 5.500h3" stroke="#140a00" stroke-width="1.500"/>
                        </pattern>
                        <pattern id="stones" x="353" y="363" width="27" height="27" patternUnits="userSpaceOnUse">
                            <path d="M14 11l2.500 4h-5zM0 24.500l2 3.500h-4zM27 24.500l2 3.500h-4zM0-2.500L2 1h-4zM27-2.500L29 1h-4z" fill="#c4c4c4"/>
                            <path d="M19 5h2v2h-2zM20 23h2v2h-2zM25 20h2v2h-2zM4 8l2-3" fill="#b5b5b5" stroke="#b5b5b5"/>
                            <path d="M8 17h1M11 4h1M9 21h1M23 13h1M3 14h1M16 20h1M6 1h1" stroke="#888"/>
                        </pattern>
                    </defs>
                </svg>

                <aside class="palette-box">
                    <header><h2>NEXUS DDI</h2><button class="shut" title="Close palette"></button></header>
                    <div class="palette-tools">
                        <button title="Settings"><svg><use href="#wrench"/></svg></button>
                        <button title="Colors"><svg><use href="#palette"/></svg></button>
                        <button title="Print"><svg><use href="#printer"/></svg></button><i class="sep"></i>
                        <button title="Design Guideline"><svg><use href="#page-gear"/></svg></button><i class="sep"></i>
                        <button title="New DDI"><svg><use href="#ddi"/></svg></button><i class="sep"></i>
                        <button title="Edit DDI"><svg><use href="#ddi-edit"/></svg></button><i class="sep"></i>
                        <button title="Crosswalks"><svg><use href="#walker"/></svg></button>
                        <button title="Markings"><svg><use href="#marking"/></svg></button><i class="sep"></i>
                        <button title="Sight Distance"><svg><use href="#survey"/></svg></button>
                        <button title="Vehicle Path"><svg><use href="#truck"/></svg></button><i class="sep"></i>
                        <button title="Summary Report"><svg><use href="#report"/></svg></button><i class="sep"></i>
                        <button title="Help"><svg><use href="#help"/></svg></button>
                        <button title="About"><svg><use href="#chevron"/></svg></button>
                    </div>
                </aside>
            </div>

            <div class="dialog" role="dialog" aria-labelledby="dialog-title">
                <header>
                    <svg class="logo"><use href="#nexus"/></svg>
                    <h2 id="dialog-title">DDI Summary Report</h2>
                    <button class="dismiss" title="Close"><svg viewBox="0 0 8 8"><path d="M1 1l6 6M7 1L1 7" stroke="#888" stroke-width=".8"/></svg></button>
                </header>
                <div class="group">
                    <div class="group-head">
                        <p>Report Details:</p>
                        <button class="chart" title="Chart"><svg><use href="#chart"/></svg></button>
                    </div>
                    <div class="list">
                        <div class="rows">
                            <table>
                                <thead><tr><th></th><th></th></tr></thead>
                                <tbody>
                                    <tr class="head"><td colspan="2">Design</td></tr>
                                    <tr><td>Design Name</td><td>N/A</td></tr>
                                    <tr><td></td><td></td></tr>
                                    <tr class="head"><td colspan="2">DDI Name</td></tr>
                                    <tr><td>DDI Name</td><td>Untitled</td></tr>
                                    <tr><td></td><td></td></tr>
                                    <tr class="head"><td colspan="2">Design Guideline</td></tr>
                                    <tr><td>Design Guideline</td><td>Iowa webinar</td></tr>
                                    <tr><td></td><td></td></tr>
                                    <tr class="head"><td colspan="2">Number of Lanes</td></tr>
                                    <tr><td>North-South</td><td>2</td></tr>
                                    <tr><td>South-North</td><td>2</td></tr>
                                    <tr><td>West-East</td><td>3</td></tr>
                                    <tr><td>East-West</td><td>3</td></tr>
                                    <tr><td>Ramp 1</td><td>3</td></tr>
                                    <tr><td>Ramp 2</td><td>2</td></tr>
                                    <tr><td>Ramp 3</td><td>3</td></tr>
                                    <tr><td>Ramp 4</td><td>2</td></tr>
                                    <tr><td></td><td></td></tr>
                                    <tr class="head"><td colspan="2">Widths</td></tr>
                                    <tr><td>Lane Width</td><td>14.00 ft</td></tr>
                                    <tr><td>Lane Width Cross</td><td>15.00 ft</td></tr>
                                    <tr><td>Internal Shoulder Width</td><td>2.00 ft</td></tr>
                                    <tr><td>External Shoulder Width</td><td>2.00 ft</td></tr>
                                    <tr><td>Sidewalk Width</td><td>8.00 ft</td></tr>
                                    <tr><td>Crosswalk Width</td><td>6.00 ft</td></tr>
                                    <tr><td>Bicycle Lane Width</td><td>0.00 ft</td></tr>
                                    <tr><td></td><td></td></tr>
                                    <tr class="head"><td colspan="2">Ramp Radii</td></tr>
                                    <tr><td>Ramp 1 Left Radius</td><td>100</td></tr>
                                    <tr><td>Ramp 1 Right Radius</td><td>200</td></tr>
                                    <tr><td>Ramp 2 Left Radius</td><td>100</td></tr>
                                    <tr><td>Ramp 2 Right Radius</td><td>200</td></tr>
                                    <tr><td>Ramp 3 Left Radius</td><td>100</td></tr>
                                    <tr><td>Ramp 3 Right Radius</td><td>200</td></tr>
                                    <tr><td>Ramp 4 Left Radius</td><td>100</td></tr>
                                    <tr><td>Ramp 4 Right Radius</td><td>200</td></tr>
                                </tbody>
                            </table>
                        </div>
                        <div class="scroll">
                            <svg viewBox="0 0 10 10"><path d="M2 7l3-3 3 3" fill="none" stroke="#333" stroke-width="1.500"/></svg>
                            <div class="track"><div class="thumb"></div></div>
                            <svg viewBox="0 0 10 10"><path d="M2 3l3 3 3-3" fill="none" stroke="#333" stroke-width="1.500"/></svg>
                        </div>
                    </div>
                </div>
                <footer>
                    <button class="push export">Export</button>
                    <button class="push">OK</button>
                    <button class="push">Help</button>
                </footer>
            </div>
        </section>
    </main>
    <script src="roads.js"></script>
</body>
</html>
```

FILE: styles.css
```css
* {
    margin: 0;
    padding: 0;
    box-sizing: border-box;
}

body {
    min-height: 100vh;
    display: flex;
    flex-direction: column;
    padding: 69px 0 60px;
    background: #000;
    color: #111;
    font-family: "Open Sans", "Noto Sans", sans-serif;
    font-size: 7px;
    line-height: 10px;
}

button, select {
    font: inherit;
    color: inherit;
    border: none;
    background: none;
}

h1, h2 {
    font-size: inherit;
    font-weight: normal;
}

.sprite {
    display: none;
}

.app {
    flex: 1;
    display: flex;
    flex-direction: column;
    background: #f0f0f0;
    border-bottom: 3px solid #6d7780;
    overflow: hidden;
}

/* toolbars */
.bar {
    display: flex;
    height: 20px;
}

.tools {
    display: flex;
    align-items: center;
    height: 19px;
    background: linear-gradient(#fbfbfb, #ececec 50%, #d8d8d8);
    border-radius: 0 2px 2px 0;
}

.tools button {
    flex: 1 1 18px;
    min-width: 0;
    height: 18px;
    display: flex;
    align-items: center;
    justify-content: center;
}

.tools svg {
    flex: none;
    width: 15px;
    height: 15px;
}

.terrain { width: 136px; }
.edit { width: 232px; }
.vehicle { width: 543px; }
.camera { width: 96px; }
.primary { width: 338px; padding-left: 4px; }
.attributes { width: 347px; }

.attributes button {
    flex: 0 0 18px;
}

.grip {
    flex: none;
    width: 2px;
    height: 13px;
    margin: 0 3px;
    background: repeating-linear-gradient(#8a8a8a 0 1px, transparent 1px 3px);
}

.terrain .grip {
    margin: 0 1px;
}

.sep {
    flex: none;
    width: 1px;
    height: 16px;
    margin: 0 1px;
    background: #b4b4b4;
}

.tools .drop, .view-tools .drop {
    flex: 0 0 9px;
}

.drop::after, .combo::after {
    content: "";
    border: 2px solid transparent;
    border-top: 3px solid #111;
    border-bottom: none;
}

.menu {
    display: flex;
    gap: 8px;
    height: 16px;
    padding-left: 9px;
    font-family: "Liberation Sans Narrow", Lato, sans-serif;
    line-height: 16px;
}

.menu a {
    margin-right: -1px;
    padding-right: 1px;
    color: #000;
    text-decoration: none;
}

.combo {
    flex: 1;
    display: flex;
    align-items: center;
    justify-content: space-between;
    padding: 0 2px 0 2px;
}

.combo::after {
    margin-left: -8px;
}

.combo select {
    appearance: none;
    width: 24px;
    padding: 0 9px 0 5px;
    line-height: 12px;
}

.combo.linestyle {
    padding: 0 1px 0 2px;
}

.combo.linestyle select {
    width: 27px;
    padding: 0 5px 0 0;
}

.combo.off {
    color: #999;
}

.combo.off select {
    opacity: 1;
}

.combo.off::after {
    border-top-color: #888;
}

.combo.template {
    flex: none;
    width: 82px;
    height: 14px;
    margin: 0 1px;
    border: 1px solid #a9a9a9;
    background: #e2e2e2;
}

.combo.template select {
    flex: 1;
    padding-left: 0;
}

/* view window */
.view {
    flex: 1;
    position: relative;
    display: flex;
    flex-direction: column;
    border: solid #cfe0f2;
    border-width: 0 2px 3px 5px;
}

.view-title {
    display: flex;
    align-items: center;
    gap: 4px;
    height: 20px;
    margin-left: -5px;
    padding: 2px 0 0 8px;
    background: linear-gradient(#99b4d4, #bed0e8);
    border-top: 2px solid #707b86;
}

.view-title h1 {
    flex: 1;
}

.view-icon {
    width: 6px;
    height: 6px;
    background: linear-gradient(90deg, #27c0ef 50%, #1b66cf 50%);
}

.win {
    display: flex;
    align-items: center;
    justify-content: center;
    width: 18px;
    height: 12px;
    background: linear-gradient(#c9daec, #9db6d2);
    border: 1px solid #5f7994;
    border-radius: 2px;
}

.win.red {
    width: 20px;
    margin-right: 1px;
    background: linear-gradient(#e08d80, #b93d2a 50%, #cf5e48);
    border-color: #6f2a20;
}

.win svg {
    width: 7px;
    height: 7px;
}

.win i {
    width: 8px;
    height: 4px;
    background: #fff;
    border: 1px solid #4a5b6d;
    border-radius: 1px;
}

.win .max {
    width: 7px;
    height: 6px;
}

.view-tools {
    display: flex;
    align-items: center;
    height: 15px;
    background: #f0f0f0;
}

.view-tools button {
    display: flex;
    align-items: center;
    justify-content: center;
    width: 14px;
    height: 14px;
}

.view-tools svg {
    width: 11px;
    height: 11px;
}

.view-tools .sep {
    height: 12px;
}

.canvas {
    flex: 1;
    position: relative;
    background: #000;
    overflow: hidden;
}

#drawing {
    position: absolute;
    width: 100%;
    height: 100%;
}

#drawing > path { fill: none; }
#drawing > .brick { fill: url(#brick); }
#drawing > .stones { fill: url(#stones); }
#drawing .walk { stroke: #999; stroke-width: 10; }
#drawing .kerb { stroke: #35dfe2; stroke-width: 2; }
#drawing .wide { stroke: #35dfe2; stroke-width: 3; }
#drawing .line { stroke: #fff; stroke-width: 1.8; }
#drawing .dots { stroke: #fff; stroke-width: 2; stroke-dasharray: 2 3; }
#drawing .cross { stroke: #fff; stroke-width: 7; }

/* floating palette */
.palette-box {
    position: absolute;
    left: 19px;
    top: 8px;
    width: 255px;
    background: #f0f0f0;
}

.palette-box header {
    display: flex;
    align-items: center;
    justify-content: space-between;
    height: 19px;
    padding: 1px 1px 0 5px;
    background: #fff;
    color: #8c8c8c;
}

.shut {
    width: 11px;
    height: 12px;
    background: #dadada;
}

.palette-tools {
    display: flex;
    align-items: center;
    height: 22px;
    padding: 0 2px;
}

.palette-tools button {
    flex: 1;
    display: flex;
    justify-content: center;
}

.palette-tools svg {
    flex: none;
    width: 15px;
    height: 15px;
}

/* report dialog */
.dialog {
    position: absolute;
    top: 8px;
    right: 91px;
    bottom: 1px;
    width: 227px;
    display: flex;
    flex-direction: column;
    background: #f0f0f0;
    border: 1px solid #a8a8a8;
}

.dialog header {
    display: flex;
    align-items: center;
    gap: 3px;
    height: 16px;
    padding: 0 5px 0 4px;
    background: #fff;
    color: #8c8c8c;
}

.dialog h2 {
    flex: 1;
}

.logo {
    width: 10px;
    height: 10px;
}

.dismiss svg {
    display: block;
    width: 8px;
    height: 8px;
}

.group {
    flex: 1;
    min-height: 0;
    display: flex;
    flex-direction: column;
    margin: 7px 4px 0;
    padding: 2px 6px 8px;
    border: 1px solid #dcdcdc;
}

.group-head {
    display: flex;
    justify-content: space-between;
    align-items: center;
    height: 17px;
}

.chart {
    width: 15px;
    height: 15px;
    border: 1px solid #adadad;
    background: #e1e1e1;
}

.chart svg {
    display: block;
    width: 13px;
    height: 13px;
}

.list {
    flex: 1;
    min-height: 0;
    display: flex;
}

.rows {
    flex: 1;
    overflow: hidden;
    border: solid #6e6e6e;
    border-width: 1px 2px 0 1px;
    background: #fff;
}

table {
    width: 100%;
    table-layout: fixed;
    border-collapse: collapse;
}

th {
    height: 11px;
    background: #f0f0f0;
    border: solid #777;
    border-width: 0 1px 1px 0;
}

td {
    height: 12px;
    padding: 0 2px;
    border: solid #c4c4c4;
    border-width: 0 1px 1px 0;
    white-space: nowrap;
}

.head td {
    background: #c0c0c0;
}

.scroll {
    width: 13px;
    display: flex;
    flex-direction: column;
    align-items: center;
    padding-left: 2px;
}

.scroll svg {
    width: 10px;
    height: 10px;
}

.track {
    flex: 1;
    width: 10px;
}

.thumb {
    height: 41%;
    background: #cdcdcd;
}

.dialog footer {
    display: flex;
    gap: 10px;
    padding: 4px 5px 5px;
}

.push {
    width: 46px;
    height: 14px;
    background: #e1e1e1;
    border: 1px solid #adadad;
}

.export {
    margin-right: auto;
}
```

FILE: roads.js
```javascript
const drawing = document.getElementById('drawing');

// Catmull-Rom through every point, written as bezier segments
function curve(pts) {
    let d = '';
    for (let i = 0; i < pts.length - 1; i++) {
        const a = pts[i - 1] || pts[i], b = pts[i], c = pts[i + 1], e = pts[i + 2] || c;
        d += `C${b[0] + (c[0] - a[0]) / 6} ${b[1] + (c[1] - a[1]) / 6} ${c[0] - (e[0] - b[0]) / 6} ${c[1] - (e[1] - b[1]) / 6} ${c[0]} ${c[1]}`;
    }
    return d;
}

// parallel copy, positive distance is to the right of travel
function offset(pts, dist) {
    return pts.map((p, i) => {
        const a = pts[i - 1] || p, b = pts[i + 1] || p;
        const dx = b[0] - a[0], dy = b[1] - a[1], len = Math.hypot(dx, dy);
        return [p[0] - dy / len * dist, p[1] + dx / len * dist];
    });
}

function draw(cls, ...parts) {
    const path = document.createElementNS('http://www.w3.org/2000/svg', 'path');
    path.setAttribute('class', cls);
    path.setAttribute('d', 'M' + parts[0][0] + parts.map((p, i) => (i ? 'L' + p[0] : '') + curve(p)).join(''));
    drawing.appendChild(path);
}

// edges of the four islands, clockwise
const nw = {
    left: [[256,339],[270,334],[300,322],[323,308],[342,295],[357,280],[373,259],[386,237],[396,216]],
    right: [[396,216],[396,242],[400,262],[407,280],[419,299],[433,314],[450,327]],
    bottom: [[450,327],[407,328],[380,331],[353,338],[323,349],[302,358]],
    base: [[302,358],[268,345],[256,339]]
};
const ne = {
    left: [[683,325],[694,316],[708,302],[721,283],[730,265],[735,245],[737,222]],
    right: [[737,222],[750,247],[763,268],[776,284],[790,297],[815,314],[837,324],[857,332]],
    bottom: [[857,332],[823,343],[788,358]],
    base: [[788,358],[757,345],[723,334],[703,328],[683,325]]
};
const sw = {
    top: [[232,420],[263,409],[302,392]],
    right: [[302,392],[345,410],[373,420],[405,426]],
    inner: [[405,426],[387,439],[370,458],[358,480],[353,502],[351,528]],
    outer: [[351,528],[340,508],[325,486],[303,464],[280,446],[255,431],[232,420]]
};
const se = {
    top: [[675,427],[700,425],[723,421],[757,408],[788,392]],
    right: [[788,392],[823,408],[853,419]],
    inner: [[853,419],[825,431],[800,446],[777,463],[757,484],[740,508],[727,532]],
    outer: [[727,532],[726,511],[721,487],[710,463],[694,443],[675,427]]
};
const islands = [nw, ne, sw, se];

// medians
const westTop = [[5,361],[77,361],[97,358],[125,354],[147,352],[167,351],[187,352],[207,356],[233,364],[260,376]];
const westLow = [[260,376],[237,386],[213,393],[187,398],[160,400],[133,398],[107,393],[87,389],[67,386],[5,385]];
const midTop = [[345,376],[373,362],[390,356],[410,352],[430,351],[500,351],[590,351],[610,351],[627,350],[643,349],[663,350],[690,354],[713,361],[730,367],[748,375]];
const midLow = [[748,376],[717,388],[690,396],[667,400],[643,401],[590,401],[490,401],[430,401],[410,400],[390,396],[373,390],[345,376]];
const eastTop = [[830,376],[843,369],[860,363],[886,356],[900,354]];
const eastLow = [[900,399],[886,396],[860,389],[843,383],[830,376]];

draw('stones', westTop, westLow);
draw('stones', midTop, midLow);
draw('stones', eastTop, eastLow);
islands.forEach(i => draw('brick', ...Object.values(i)));

// sidewalks follow the outer road edge
const walks = [
    [[5,326],[77,326],[100,322],[127,317],[150,315],[173,314],[200,315],[220,315],[243,312],[267,306],[283,300],[303,289],[324,274]],
    [[419,276],[430,293],[446,309],[463,320],[482,327],[505,328],[590,328],[610,328],[635,326],[656,322],[674,314],[690,302],[702,289],[711,275]],
    [[797,278],[807,288],[823,300],[843,310],[863,318],[886,323]],
    [[293,472],[270,453],[247,440],[223,431],[200,426],[177,425],[155,424],[133,421],[113,417],[93,412],[77,410],[55,409],[5,409]],
    [[704,477],[698,465],[686,451],[667,437],[647,427],[623,424],[590,424],[470,424],[453,424],[433,428],[411,438],[393,453],[377,472]],
    [[886,441],[863,445],[840,453],[817,466],[796,483]]
];
walks.forEach(p => {
    draw('walk', offset(p, -5));
    draw('line', p);
});

// kerbed ramp edges
const kerbs = [
    [[324,274],[341,257],[353,241],[363,223],[373,203],[382,182],[392,160]],
    [[434,160],[424,180],[415,204],[411,222],[411,242],[414,260],[419,276]],
    [[711,275],[719,258],[723,242],[724,225],[721,208],[715,185],[708,160]],
    [[733,160],[741,191],[749,213],[761,237],[776,258],[797,278]],
    [[378,665],[358,600],[345,559],[335,532],[321,507],[306,487],[293,472]],
    [[377,472],[370,486],[366,504],[365,527],[369,549],[379,583],[404,665]],
    [[664,665],[691,593],[708,547],[713,525],[712,503],[708,488],[704,477]],
    [[796,483],[775,506],[756,534],[742,567],[725,610],[704,665]]
];
kerbs.forEach(p => {
    draw('kerb', offset(p, -2));
    draw('line', p);
});

// islands: kerb on the edge, paint just outside
islands.forEach(i => Object.values(i).forEach(p => {
    draw('kerb', p);
    draw('line', offset(p, -2));
}));
[westTop, westLow, midTop, midLow, eastTop, eastLow].forEach(p => {
    draw('wide', offset(p, 2));
    draw('line', p);
});

// remaining lane lines
[
    [[5,337],[77,337],[100,334],[127,329],[150,327],[167,326],[190,327],[210,330],[230,334],[247,338],[256,341]],
    [[5,349],[67,349],[93,347],[127,341],[150,339],[177,339],[197,341],[213,342],[233,341],[256,337]],
    [[5,397],[57,397],[87,400],[113,405],[143,411],[167,412],[187,412],[207,415],[232,421]],
    [[177,425],[197,423],[213,422],[232,419]],
    [[302,359],[340,376]], [[260,376],[302,358]], [[260,376],[302,393]], [[302,393],[346,375]],
    [[748,375],[788,358]], [[788,358],[830,376]], [[748,376],[788,393]], [[788,393],[830,375]],
    [[397,218],[399,203],[408,182],[419,160]],
    [[450,326],[475,327],[505,328]],
    [[448,326],[463,333],[479,338],[500,340],[590,340],[620,339],[650,337],[670,332],[685,324]],
    [[635,326],[650,325],[683,325]],
    [[720,160],[727,188],[733,211],[738,223]],
    [[857,332],[870,330],[886,328]], [[855,331],[870,335],[886,337]],
    [[405,426],[433,425],[470,424]],
    [[405,426],[423,418],[442,413],[467,411],[540,411],[617,411],[640,414],[657,418],[675,427]],
    [[623,424],[650,426],[675,426]],
    [[853,419],[870,417],[886,415]], [[853,419],[870,422],[886,424]],
    [[351,526],[354,540],[363,570],[392,665]],
    [[728,530],[723,543],[703,597],[677,665]]
].forEach(p => draw('line', p));

[
    [[203,328],[227,328],[253,325],[277,318],[300,307],[310,302],[327,289],[340,278],[355,260],[370,237],[380,212],[393,185],[406,160]],
    [[203,342],[233,349],[258,357],[280,367],[302,376],[313,382],[345,394],[370,403],[400,410],[433,413],[450,412]],
    [[177,411],[200,410],[227,406],[257,394],[280,385],[302,376],[313,370],[345,358],[370,348],[400,342],[433,340],[490,340]],
    [[625,412],[667,412],[690,409],[717,403],[745,393],[770,384],[788,376],[803,370],[832,357],[857,349],[886,343]],
    [[620,339],[640,338],[663,338],[690,342],[717,348],[745,357],[770,367],[788,376],[803,382],[832,394],[857,403],[886,411]],
    [[886,427],[863,432],[837,441],[807,457],[790,469],[777,479],[757,503],[740,533],[727,567],[707,620],[691,665]]
].forEach(p => draw('dots', p));

// crosswalks
[
    [[323,272],[341,295]], [[406,279],[422,273]], [[709,274],[725,282]], [[785,291],[798,279]],
    [[290,473],[303,461]], [[362,468],[378,476]], [[701,478],[717,472]], [[777,461],[797,484]]
].forEach(p => draw('cross', p));
```
